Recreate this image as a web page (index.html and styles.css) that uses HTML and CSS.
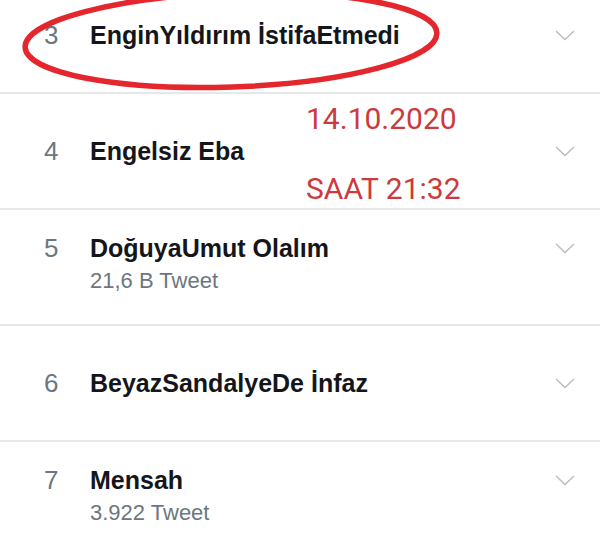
FILE: index.html
```html
<!DOCTYPE html>
<html lang="tr">
<head>
    <meta charset="UTF-8">
    <meta name="viewport" content="width=device-width, initial-scale=1.0">
    <title>Gündem</title>
    <link rel="stylesheet" href="styles.css">
</head>
<body>
    <ul class="trends">
        <li class="trend">
            <span class="rank">3</span>
            <span class="title">EnginYıldırım İstifaEtmedi</span>
            <span class="chevron"><svg width="20" height="11" viewBox="0 0 20 11"><path d="M1 1 L10 9.5 L19 1" fill="none" stroke="#b6bec4" stroke-width="1.5"/></svg></span>
        </li>
        <li class="trend">
            <span class="rank">4</span>
            <span class="title">Engelsiz Eba</span>
            <span class="chevron"><svg width="20" height="11" viewBox="0 0 20 11"><path d="M1 1 L10 9.5 L19 1" fill="none" stroke="#b6bec4" stroke-width="1.5"/></svg></span>
            <div class="note">
                <span>14.10.2020</span>
                <span>SAAT 21:32</span>
            </div>
        </li>
        <li class="trend">
            <span class="rank">5</span>
            <span class="title">DoğuyaUmut Olalım</span>
            <span class="chevron"><svg width="20" height="11" viewBox="0 0 20 11"><path d="M1 1 L10 9.5 L19 1" fill="none" stroke="#b6bec4" stroke-width="1.5"/></svg></span>
            <span class="count">21,6 B Tweet</span>
        </li>
        <li class="trend">
            <span class="rank">6</span>
            <span class="title">BeyazSandalyeDe İnfaz</span>
            <span class="chevron"><svg width="20" height="11" viewBox="0 0 20 11"><path d="M1 1 L10 9.5 L19 1" fill="none" stroke="#b6bec4" stroke-width="1.5"/></svg></span>
        </li>
        <li class="trend">
            <span class="rank">7</span>
            <span class="title">Mensah</span>
            <span class="chevron"><svg width="20" height="11" viewBox="0 0 20 11"><path d="M1 1 L10 9.5 L19 1" fill="none" stroke="#b6bec4" stroke-width="1.5"/></svg></span>
            <span class="count">3.922 Tweet</span>
        </li>
    </ul>
    <svg class="circle-mark" width="600" height="110" viewBox="0 0 600 110">
        <ellipse cx="231" cy="40" rx="206" ry="47" fill="none" stroke="#e3272c" stroke-width="5.5" transform="rotate(-2 231 40)"/>
    </svg>
</body>
</html>
```

FILE: styles.css
```css
* {
    margin: 0;
    padding: 0;
    box-sizing: border-box;
}

body {
    background: #fff;
    font-family: 'Liberation Sans', Arial, sans-serif;
    overflow: hidden;
    position: relative;
    height: 536px;
}

.trends {
    list-style: none;
    margin-top: -22px;
}

.trend {
    position: relative;
    display: grid;
    grid-template-columns: 46px 1fr 20px;
    align-content: center;
    height: 116px;
    padding: 0 25px 0 44px;
    border-bottom: 2px solid #e6e7e8;
}

.rank {
    font-size: 26px;
    line-height: 28px;
    color: #6b777f;
}

.title {
    font-size: 25px;
    font-weight: bold;
    line-height: 28px;
    color: #141619;
}

.chevron {
    display: flex;
    align-items: center;
    height: 28px;
}

.count {
    grid-column: 2;
    font-size: 22px;
    line-height: 38px;
    color: #6b777f;
}

/* kırmızı el yazısı notlar */
.note {
    position: absolute;
    left: 306px;
    top: 7px;
    display: flex;
    flex-direction: column;
    gap: 35px;
    font-family: Roboto, sans-serif;
    font-size: 30px;
    line-height: 35px;
    color: #cc3a3d;
}

.circle-mark {
    position: absolute;
    left: 0;
    top: 0;
    pointer-events: none;
}
```
